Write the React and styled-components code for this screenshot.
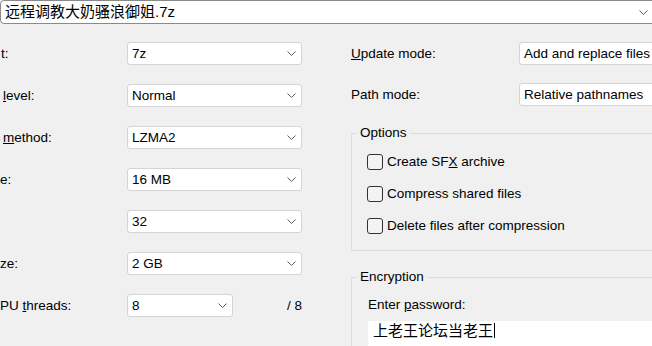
import React from 'react';
import styled, { createGlobalStyle } from 'styled-components';

const Global = createGlobalStyle`
  html, body { margin: 0; padding: 0; background: #f0f0f0; }
  body {
    width: 652px; height: 346px; overflow: hidden;
    font-family: "Liberation Sans", Arial, sans-serif;
    font-size: 13.5px; color: #000;
  }
  #root { width: 652px; height: 346px; overflow: hidden; }
`;

const Dialog = styled.div`
  width: 652px;
  height: 346px;
  overflow: hidden;
  background: #f0f0f0;
  display: flex;
  flex-direction: column;
`;

const FileCombo = styled.div`
  box-sizing: border-box;
  flex: none;
  width: 660px;
  height: 24px;
  background: #fff;
  border: 1px solid #8a8a8a;
  border-radius: 4px;
  display: flex;
  align-items: center;
  padding: 0 11px 0 4px;
  font-family: "Liberation Sans", "Noto Sans CJK SC", sans-serif;
  font-size: 15px;
  line-height: 20px;
`;

const FileName = styled.span`
  flex: 1;
  white-space: nowrap;
`;

const Main = styled.div`
  display: flex;
  align-items: flex-start;
  margin-top: 18px;
`;

const LeftCol = styled.div`
  flex: none;
  width: 351px;
  display: flex;
  flex-direction: column;
  gap: 19px;
`;

const Row = styled.div`
  display: flex;
  align-items: center;
  width: 302px;
  height: 23px;
  line-height: 16px;
`;

const Label = styled.span`
  flex: none;
  width: ${p => p.$w}px;
  box-sizing: border-box;
  padding-left: ${p => p.$x || 0}px;
  white-space: nowrap;
  overflow: hidden;
`;

const Combo = styled.div`
  box-sizing: border-box;
  flex: none;
  width: ${p => p.$w}px;
  height: 23px;
  background: #fff;
  border: 1px solid #d4d4d4;
  border-radius: 3px;
  display: flex;
  align-items: center;
  justify-content: space-between;
  padding: 0 5px 0 4px;
  white-space: nowrap;
  overflow: hidden;
`;

const Suffix = styled.span`
  margin-left: auto;
  white-space: nowrap;
`;

const RightCol = styled.div`
  flex: none;
  width: 301px;
  display: flex;
  flex-direction: column;
`;

const RightRow = styled.div`
  display: flex;
  align-items: center;
  height: 23px;
  margin-top: ${p => p.$gap || 0}px;
  line-height: 16px;
`;

const Group = styled.fieldset`
  box-sizing: border-box;
  width: 320px;
  margin: ${p => p.$top}px 0 0 0;
  padding: 0;
  border: 1px solid #dcdcdc;
  border-radius: 0;
  min-width: 0;
`;

const Legend = styled.legend`
  margin-left: 5px;
  padding: 0 3px;
  line-height: 16px;
`;

const OptionsBody = styled.div`
  display: flex;
  flex-direction: column;
  padding: 5px 0 8px 15px;
`;

const CheckRow = styled.label`
  display: flex;
  align-items: center;
  gap: 4px;
  height: 32px;
  line-height: 16px;
`;

const CheckText = styled.span`
  white-space: nowrap;
`;

const CheckBox = styled.span`
  box-sizing: border-box;
  flex: none;
  width: 16px;
  height: 16px;
  border: 1px solid #333;
  border-radius: 3px;
  background: #f3f3f3;
`;

const EncBody = styled.div`
  padding: 12px 0 0 16px;
`;

const PasswordLabel = styled.div`
  line-height: 16px;
`;

const PasswordField = styled.div`
  margin-top: 8px;
  width: 300px;
  height: 30px;
  box-sizing: border-box;
  background: #fff;
  padding: 1px 0 0 5px;
  font-family: "Liberation Sans", "Noto Sans CJK SC", sans-serif;
  font-size: 15px;
  line-height: 17px;
  white-space: nowrap;
`;

const Caret = styled.span`
  display: inline-block;
  width: 1px;
  height: 15px;
  background: #000;
  vertical-align: -2px;
  margin-left: 1px;
`;

const Chevron = () => (
  <svg width="9" height="5" viewBox="0 0 9 5" style={{ flex: 'none' }}>
    <polyline points="0.5,0.5 4.5,4.5 8.5,0.5" fill="none" stroke="#5a5a5a" strokeWidth="1" />
  </svg>
);

const leftRows = [
  { label: 't:', x: 1, value: '7z' },
  { label: <><u>l</u>evel:</>, x: 3, value: 'Normal' },
  { label: <><u>m</u>ethod:</>, x: 3, value: 'LZMA2' },
  { label: 'e:', x: 0, value: '16 MB' },
  { label: '', x: 0, value: '32' },
  { label: 'ze:', x: 0, value: '2 GB' },
];

export default function App() {
  return (
    <>
      <Global />
      <Dialog>
        <FileCombo>
          <FileName>远程调教大奶骚浪御姐.7z</FileName>
          <Chevron />
        </FileCombo>
        <Main>
          <LeftCol>
            {leftRows.map((r, i) => (
              <Row key={i}>
                <Label $w={127} $x={r.x}>{r.label}</Label>
                <Combo $w={175}>
                  <span>{r.value}</span>
                  <Chevron />
                </Combo>
              </Row>
            ))}
            <Row>
              <Label $w={127}>PU <u>t</u>hreads:</Label>
              <Combo $w={106}>
                <span>8</span>
                <Chevron />
              </Combo>
              <Suffix>/ 8</Suffix>
            </Row>
          </LeftCol>
          <RightCol>
            <RightRow>
              <Label $w={168}><u>U</u>pdate mode:</Label>
              <Combo $w={150}><span>Add and replace files</span></Combo>
            </RightRow>
            <RightRow $gap={18}>
              <Label $w={168}>Path mode:</Label>
              <Combo $w={150}><span>Relative pathnames</span></Combo>
            </RightRow>
            <Group $top={19}>
              <Legend>Options</Legend>
              <OptionsBody>
                <CheckRow><CheckBox /><CheckText>Create SF<u>X</u> archive</CheckText></CheckRow>
                <CheckRow><CheckBox /><CheckText>Compress shared files</CheckText></CheckRow>
                <CheckRow><CheckBox /><CheckText>Delete files after compression</CheckText></CheckRow>
              </OptionsBody>
            </Group>
            <Group $top={18}>
              <Legend>Encryption</Legend>
              <EncBody>
                <PasswordLabel>Enter <u>p</u>assword:</PasswordLabel>
                <PasswordField>上老王论坛当老王<Caret /></PasswordField>
              </EncBody>
            </Group>
          </RightCol>
        </Main>
      </Dialog>
    </>
  );
}
